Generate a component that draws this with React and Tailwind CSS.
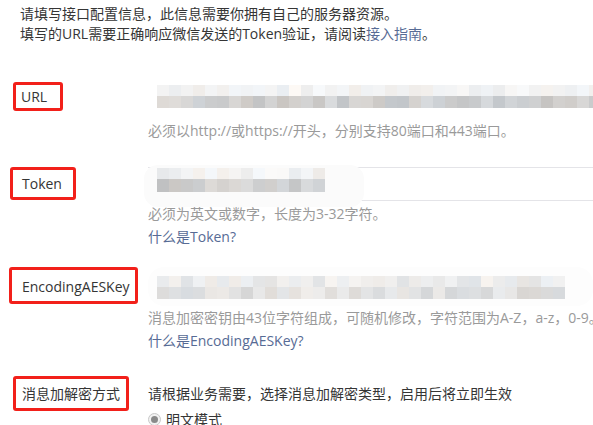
import React from "react";

function rand(seed) {
  let s = seed;
  return () => {
    s = (s * 9301 + 49297) % 233280;
    return s / 233280;
  };
}

function Mosaic({ count, seed, light = [232, 248], dark = [196, 222], rowH = [11, 12] }) {
  const r = rand(seed);
  const row = (range) =>
    Array.from({ length: count }, () => {
      const v = Math.round(range[0] + r() * (range[1] - range[0]));
      const tint = Math.round((r() - 0.5) * 8);
      return `rgb(${v + tint},${v},${v - tint})`;
    });
  const r1 = row(light);
  const r2 = row(dark);
  return (
    <div className="flex flex-col">
      <div className="flex">
        {r1.map((c, i) => (
          <div key={i} className="w-[12px] shrink-0" style={{ backgroundColor: c, height: rowH[0] }} />
        ))}
      </div>
      <div className="flex">
        {r2.map((c, i) => (
          <div key={i} className="w-[12px] shrink-0" style={{ backgroundColor: c, height: rowH[1] }} />
        ))}
      </div>
    </div>
  );
}

function Label({ children, className }) {
  return (
    <div
      className={
        "flex items-center border-[3px] border-[#f2201a] rounded-[3px] text-[14px] text-[#353535] whitespace-nowrap " +
        className
      }
    >
      {children}
    </div>
  );
}

export default function App() {
  return (
    <div
      className="w-[593px] h-[425px] overflow-hidden bg-white relative text-[14px] text-[#353535]"
      style={{ fontFamily: "'Open Sans', 'Noto Sans CJK SC', sans-serif" }}
    >
      <div className="pl-[20px] pt-[4px] leading-[20px]">
        <div>请填写接口配置信息，此信息需要你拥有自己的服务器资源。</div>
        <div>
          填写的URL需要正确响应微信发送的Token验证，请阅读<span className="text-[#576b95]">接入指南</span>。
        </div>
      </div>

      {/* URL */}
      <div className="flex mt-[38px]">
        <div className="w-[148px] shrink-0">
          <Label className="ml-[13px] w-[50px] h-[29px] pl-[5px]">URL</Label>
        </div>
        <div className="flex-1 min-w-0">
          <div className="mt-[2px] h-[34px] pt-[1px] pl-[9px] overflow-hidden">
            <Mosaic count={37} seed={7} light={[236, 250]} dark={[196, 222]} />
          </div>
          <div className="mt-[3px] leading-[20px] text-[#9a9a9a] whitespace-nowrap">
            必须以http://或https://开头，分别支持80端口和443端口。
          </div>
        </div>
      </div>

      {/* Token */}
      <div className="flex mt-[26px]">
        <div className="w-[148px] shrink-0">
          <Label className="ml-[10px] w-[66px] h-[33px] pl-[9px]">Token</Label>
        </div>
        <div className="flex-1 min-w-0">
          <div className="relative h-[34px] border-y border-[#e4e4e8]">
            <div className="absolute left-[-4px] top-[-3px] w-[220px] h-[42px] bg-[#fbfbfb] rounded-[14px] pt-[3px] pl-[13px]">
              <Mosaic count={14} seed={21} light={[232, 250]} dark={[192, 222]} rowH={[11, 13]} />
            </div>
          </div>
          <div className="mt-[1px] leading-[23px] text-[#9a9a9a] whitespace-nowrap">
            必须为英文或数字，长度为3-32字符。
          </div>
          <div className="leading-[23px] text-[#576b95]">什么是Token?</div>
        </div>
      </div>

      {/* EncodingAESKey */}
      <div className="flex mt-[19px]">
        <div className="w-[148px] shrink-0">
          <Label className="ml-[9px] w-[129px] h-[37px] pl-[10px] pt-[2px]">EncodingAESKey</Label>
        </div>
        <div className="flex-1 min-w-0">
          <div className="h-[39px] pt-[9px] pl-[9px] overflow-hidden bg-[#fdfdfd] rounded-[16px]">
            <Mosaic count={34} seed={33} light={[226, 244]} dark={[214, 238]} rowH={[11, 12]} />
          </div>
          <div className="leading-[23px] text-[#9a9a9a] whitespace-nowrap">
            消息加密密钥由43位字符组成，可随机修改，字符范围为A-Z，a-z，0-9。
          </div>
          <div className="leading-[23px] text-[#576b95]">什么是EncodingAESKey?</div>
        </div>
      </div>

      {/* 消息加解密方式 */}
      <div className="flex mt-[24px]">
        <div className="w-[148px] shrink-0">
          <Label className="ml-[13px] w-[116px] h-[35px] pl-[6px]">消息加解密方式</Label>
        </div>
        <div className="flex-1 min-w-0">
          <div className="mt-[6px] leading-[23px] whitespace-nowrap">
            请根据业务需要，选择消息加解密类型，启用后将立即生效
          </div>
          <div className="mt-[3px] flex items-center leading-[23px]">
            <span className="w-[13px] h-[13px] rounded-full border border-[#c8c8c8] bg-[#f2f2f2] flex items-center justify-center mr-[5px]">
              <span className="w-[7px] h-[7px] rounded-full bg-[#8a8a8a]" />
            </span>
            明文模式
          </div>
        </div>
      </div>
    </div>
  );
}
